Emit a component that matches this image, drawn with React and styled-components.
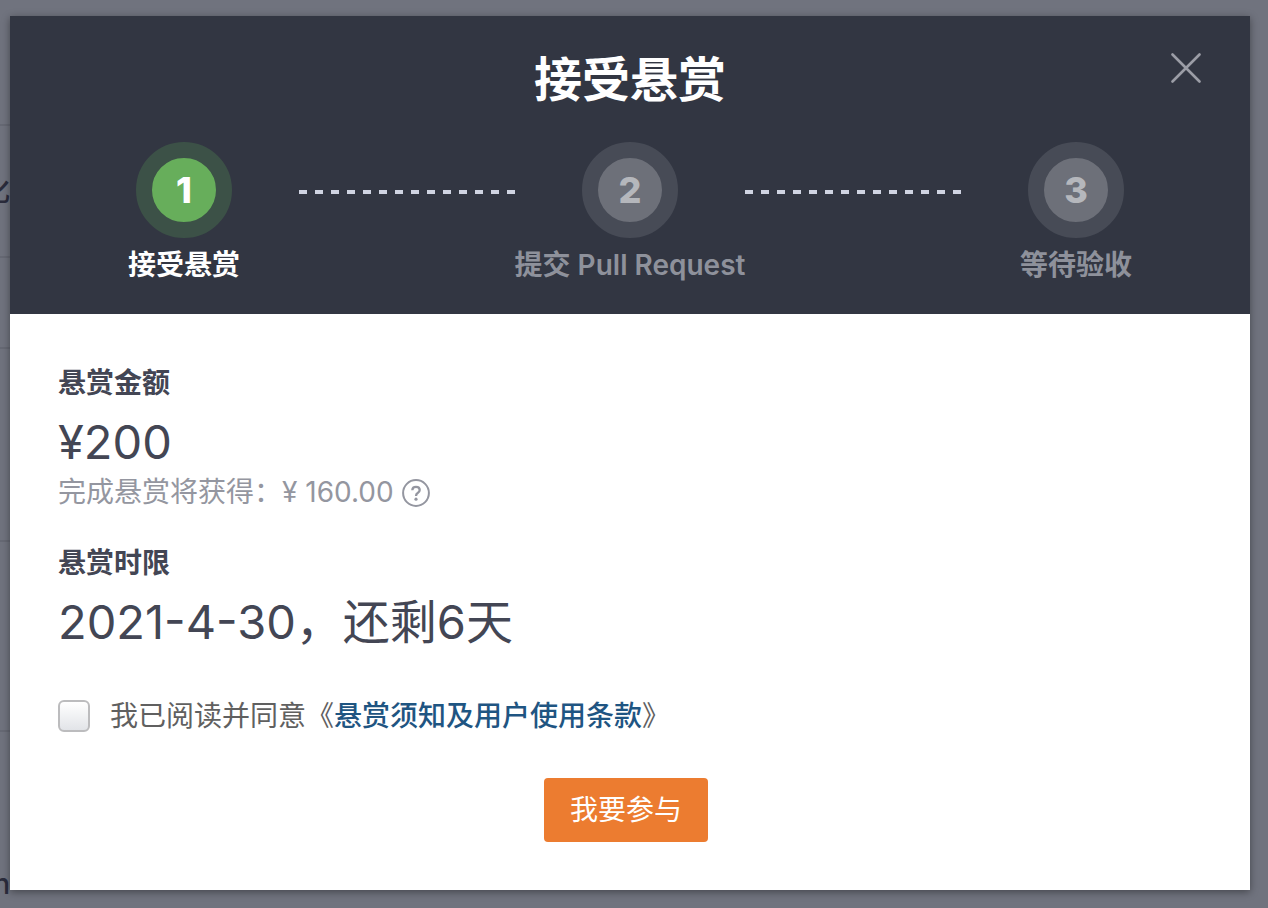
import React from "react";
import styled, { createGlobalStyle } from "styled-components";

const GlobalStyle = createGlobalStyle`
  *, *::before, *::after { box-sizing: border-box; }
  html, body { margin: 0; min-height: 100%; background: #70737e; }
  body {
    font-family: Inter, "Noto Sans CJK SC", sans-serif;
    font-size: 28px;
    line-height: 40px;
    color: #434654;
  }
  h1, h2, p, ol { margin: 0; padding: 0; }
`;

const Screen = styled.div`
  position: relative;
  min-height: 100vh;
  padding: 16px 18px 18px 10px;
  overflow: hidden;
`;

const Backdrop = styled.div`
  position: absolute;
  inset: 0 auto 0 0;
  width: 10px;
  overflow: hidden;
`;

const BackdropRow = styled.div`
  display: flex;
  justify-content: flex-end;
  align-items: ${(p) => p.$align || "center"};
  height: ${(p) => p.$height}px;
  border-bottom: 2px solid #666974;
  color: #2b2c3c;
  font-weight: 500;
  white-space: nowrap;

  &:last-child { border-bottom: 0; }
`;

const Dialog = styled.section`
  position: relative;
  background: #fff;
  box-shadow: 0 2px 8px rgba(0, 0, 0, 0.4);
`;

const Header = styled.header`
  padding: 32px 59px 29px;
  background: #323642;
`;

const Title = styled.h1`
  font-size: 48px;
  line-height: 64px;
  font-weight: 600;
  text-align: center;
  color: #fff;
`;

const CloseButton = styled.button`
  position: absolute;
  top: 32px;
  right: 44px;
  display: flex;
  align-items: center;
  justify-content: center;
  width: 40px;
  height: 40px;
  padding: 0;
  border: 0;
  background: none;
  color: #9b9da6;
  cursor: pointer;
`;

const Steps = styled.ol`
  display: grid;
  grid-template-columns: 230px 1fr 230px 1fr 230px;
  margin-top: 30px;
  list-style: none;
`;

const Step = styled.li`
  display: flex;
  flex-direction: column;
  align-items: center;
  gap: 7px;
  font-weight: 600;
  white-space: nowrap;
  color: ${(p) => (p.$active ? "#fff" : "#8e919b")};
`;

const StepNumber = styled.span`
  display: flex;
  align-items: center;
  justify-content: center;
  width: 96px;
  height: 96px;
  border: 16px solid ${(p) => (p.$active ? "#3c5147" : "#474b56")};
  border-radius: 50%;
  background: ${(p) => (p.$active ? "#67ae5b" : "#6d7079")};
  font-size: 36px;
  font-weight: 800;
  color: ${(p) => (p.$active ? "#fff" : "#b5b7bc")};
`;

const Connector = styled.li`
  height: 4px;
  margin-top: 48px;
  background: repeating-linear-gradient(90deg, #d0d4e2 0 8px, transparent 8px 16px);
`;

const Body = styled.form`
  padding: 49px 56px 48px 48px;
`;

const Field = styled.div`
  & + & { margin-top: 32px; }
`;

const FieldLabel = styled.h2`
  font-size: 28px;
  line-height: 40px;
  font-weight: 600;
`;

const FieldValue = styled.p`
  margin-top: 7px;
  font-size: 47px;
  line-height: 64px;
`;

const Note = styled.p`
  display: flex;
  align-items: center;
  gap: 8px;
  line-height: 37px;
  color: #9496a0;
`;

const Agreement = styled.div`
  display: flex;
  align-items: center;
  gap: 20px;
  margin-top: 42px;
  color: #606060;
`;

const Checkbox = styled.input`
  appearance: none;
  width: 32px;
  height: 32px;
  margin: 0;
  border: 2px solid #bcbcbe;
  border-radius: 6px;
  background: linear-gradient(#fff, #e2e4e8);
  &:checked { background: #1f5582; }
`;

const TermsLink = styled.a`
  font-weight: 500;
  color: #1f5582;
  text-decoration: none;
`;

const Actions = styled.div`
  display: flex;
  justify-content: center;
  margin-top: 42px;
`;

const SubmitButton = styled.button`
  height: 64px;
  padding: 0 26px;
  border: 0;
  border-radius: 4px;
  background: #ec7c30;
  color: #fff;
  font: inherit;
  cursor: pointer;
`;

const steps = ["接受悬赏", "提交 Pull Request", "等待验收"];

export default function App() {
  return (
    <>
      <GlobalStyle />
      <Screen>
        <Backdrop aria-hidden="true">
          <BackdropRow $height={126} />
          <BackdropRow $height={132}>化</BackdropRow>
          <BackdropRow $height={91} />
          <BackdropRow $height={193} />
          <BackdropRow $height={190} />
          <BackdropRow $height={172} $align="flex-end">n</BackdropRow>
        </Backdrop>
        <Dialog role="dialog" aria-labelledby="dialog-title">
          <Header>
            <Title id="dialog-title">接受悬赏</Title>
            <CloseButton type="button" aria-label="关闭">
              <svg width="30" height="30" viewBox="0 0 30 30" fill="none" stroke="currentColor" strokeWidth="2.6" strokeLinecap="round">
                <path d="M1.5 1.5 28.5 28.5M28.5 1.5 1.5 28.5" />
              </svg>
            </CloseButton>
            <Steps>
              {steps.map((label, i) => (
                <React.Fragment key={label}>
                  {i > 0 && <Connector role="presentation" />}
                  <Step $active={i === 0} aria-current={i === 0 ? "step" : undefined}>
                    <StepNumber $active={i === 0}>{i + 1}</StepNumber>
                    {label}
                  </Step>
                </React.Fragment>
              ))}
            </Steps>
          </Header>
          <Body onSubmit={(e) => e.preventDefault()}>
            <Field>
              <FieldLabel>悬赏金额</FieldLabel>
              <FieldValue>¥200</FieldValue>
              <Note>
                <span>完成悬赏将获得：¥ 160.00</span>
                <svg width="28" height="28" viewBox="0 0 28 28" fill="none" stroke="currentColor" strokeWidth="2" aria-hidden="true">
                  <circle cx="14" cy="14" r="12.9" />
                  <path d="M10.3 11.2C10.4 9 11.9 7.8 14 7.8c2.2 0 3.7 1.2 3.7 3.1 0 1.5-.8 2.3-2 3-1.2.7-1.6 1.3-1.6 2.5v.5" strokeWidth="2.3" />
                  <circle cx="14" cy="20.2" r="1.6" fill="currentColor" stroke="none" />
                </svg>
              </Note>
            </Field>
            <Field>
              <FieldLabel>悬赏时限</FieldLabel>
              <FieldValue>2021-4-30，还剩6天</FieldValue>
            </Field>
            <Agreement>
              <Checkbox type="checkbox" id="agree" />
              <label htmlFor="agree">
                我已阅读并同意《<TermsLink href="#terms">悬赏须知及用户使用条款</TermsLink>》
              </label>
            </Agreement>
            <Actions>
              <SubmitButton type="submit">我要参与</SubmitButton>
            </Actions>
          </Body>
        </Dialog>
      </Screen>
    </>
  );
}
